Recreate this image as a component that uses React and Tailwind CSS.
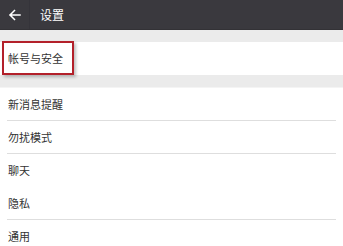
import React from "react";

const font = { fontFamily: '"Noto Sans CJK SC", "Noto Sans", sans-serif' };

function Row({ label, line }) {
  return (
    <div className="h-[33px] flex flex-col">
      <div className="flex-1 flex items-center pl-[8px] text-[11px] text-[#333]">{label}</div>
      {line ? <div className="h-px bg-[#dedede] ml-[7px] mr-[7px]" /> : <div className="h-px" />}
    </div>
  );
}

export default function App() {
  return (
    <div className="w-[343px] h-[246px] bg-white overflow-hidden" style={font}>
      <div className="h-[30px] bg-[#3a393e] flex items-center border-b border-[#333236]">
        <div className="w-[30px] h-full flex items-center justify-center border-r border-[#35343a]">
          <svg width="13" height="12" viewBox="0 0 13 12" fill="none">
            <path d="M12 6H2M6.5 1.5L2 6l4.5 4.5" stroke="#ffffff" strokeWidth="1.5" strokeLinecap="square" />
          </svg>
        </div>
        <div className="pl-[10px] text-[12px] text-white">设置</div>
      </div>
      <div className="h-[12px] bg-[#ebebeb]" />
      <div className="h-[33px] bg-white relative flex items-center pl-[8px] text-[11px] text-[#333]">
        帐号与安全
        <div className="absolute left-[2px] top-[-1px] w-[72px] h-[34px] border-2 border-[#b3202a] shadow-[2px_2px_3px_rgba(0,0,0,0.25)]" />
      </div>
      <div className="h-[13px] bg-[#ebebeb] border-b border-[#f4f4f4]" />
      <div>
        <Row label="新消息提醒" line />
        <Row label="勿扰模式" line />
        <Row label="聊天" />
        <Row label="隐私" line />
        <Row label="通用" />
      </div>
    </div>
  );
}
